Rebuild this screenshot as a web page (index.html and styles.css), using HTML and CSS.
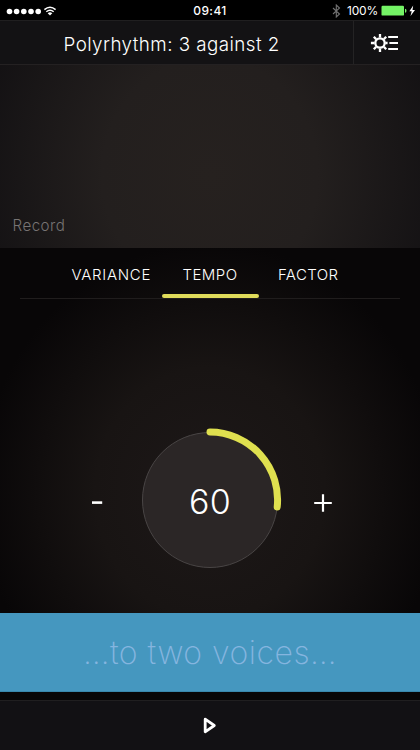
FILE: index.html
```
<!DOCTYPE html>
<html lang="en">
<head>
<meta charset="utf-8">
<title>Polyrhythm</title>
<link rel="stylesheet" href="styles.css">
</head>
<body>
<div class="app">
  <div class="status">
    <svg class="signal" width="60" height="20" viewBox="0 0 60 20">
      <g fill="#fff"><circle cx="9.5" cy="10.5" r="2.8"/><circle cx="16.6" cy="10.5" r="2.8"/><circle cx="23.8" cy="10.5" r="2.8"/><circle cx="31" cy="10.5" r="2.8"/><circle cx="38.2" cy="10.5" r="2.8"/><path d="M47.7 12.2Q50 10.5 52.3 12.2L50 14.5Z"/></g>
      <path d="M44.4 8.6Q50 3.8 55.6 8.6M46.3 10.8Q50 7.6 53.7 10.8" fill="none" stroke="#fff" stroke-width="1.5"/>
    </svg>
    <span class="time">09:41</span>
    <div class="power">
      <svg width="9" height="14" viewBox="0 0 9 14"><path d="M1 4L7.5 10L4.3 13V1L7.5 4L1 10" fill="none" stroke="#727272" stroke-width="1.1"/></svg>
      <span class="percent">100%</span>
      <svg width="36" height="14" viewBox="0 0 36 14"><rect x=".5" y="1.8" width="22.5" height="9.8" rx="1.2" fill="#74f365"/><path d="M24 4.8Q25.5 5 25.5 6.8T24 8.8Z" fill="#74f365"/><path d="M32.2 1.5L28.4 7.3H30.7L29.5 12L34 5.9H31.5Z" fill="#fff"/></svg>
    </div>
  </div>
  <header class="header">
    <h1 class="title">Polyrhythm: 3 against 2</h1>
    <button class="settings" aria-label="Settings">
      <svg width="30" height="22" viewBox="0 0 30 22" fill="none" stroke="#fff">
        <circle cx="10" cy="11" r="4.7" stroke-width="2.3"/>
        <path d="M10 5.5V2M10 16.5V20M4.5 11H.9M15.3 11H17.6M6.1 7.1L3.8 4.8M13.9 7.1L16.2 4.8M6.1 14.9L3.8 17.2M13.9 14.9L16.2 17.2" stroke-width="2.3"/>
        <path d="M18.2 5H28M19.4 11H28M18.2 17H28" stroke-width="2.1"/>
      </svg>
    </button>
  </header>
  <section class="recorder"><span class="record">Record</span></section>
  <main class="panel">
    <nav class="tabs">
      <span class="tab variance">VARIANCE</span>
      <span class="tab tempo">TEMPO</span>
      <span class="tab factor">FACTOR</span>
    </nav>
    <div class="control">
      <svg class="step" width="20" height="20" viewBox="0 0 20 20"><path d="M5 10.6H15.2" stroke="#fff" stroke-width="2.6"/></svg>
      <div class="dial">
        <svg class="ring" width="150" height="150" viewBox="0 0 150 150">
          <circle cx="75" cy="75" r="67.5" fill="#2b2626" stroke="#494545"/>
          <path d="M75 7A67.8 67.8 0 0 1 142.2 82" fill="none" stroke="#dfe04f" stroke-width="7" stroke-linecap="round"/>
        </svg>
        <span class="bpm">60</span>
      </div>
      <svg class="step" width="20" height="20" viewBox="0 0 20 20"><path d="M1.2 11H18.8M10 2.2V19.8" stroke="#fff" stroke-width="2.2"/></svg>
    </div>
  </main>
  <div class="caption"><span class="caption-text">…to two voices…</span></div>
  <footer class="player">
    <svg width="16" height="20" viewBox="0 0 16 20"><path d="M3.2 3.2L12.3 9.5L3.2 15.8Z" fill="none" stroke="#fff" stroke-width="2.8" stroke-linejoin="round"/></svg>
  </footer>
</div>
</body>
</html>
```
FILE: styles.css
```
* { box-sizing: border-box; }
body { margin: 0; background: #080607; color: #fff; font-family: Inter, "Liberation Sans", sans-serif; }
.app { width: 420px; height: 750px; display: flex; flex-direction: column; overflow: hidden; }
.app svg { display: block; flex: none; }
.status { height: 20px; flex: none; background: #000; display: grid; grid-template-columns: 1fr auto 1fr; align-items: center; }
.time { font-size: 12px; font-weight: 500; letter-spacing: .4px; line-height: 20px; padding-top: 1px; }
.power { display: flex; justify-content: flex-end; align-items: center; padding: 0 3px 0 0; }
.percent { font-size: 12px; letter-spacing: -.2px; margin: 0 3px 0 6px; }
.header { height: 45px; flex: none; display: flex; background: #131214; border-top: 1px solid #201f20; border-bottom: 1px solid #242122; }
.title { width: 353px; margin: 0; padding-left: 63.5px; font-size: 18.8px; font-weight: 350; line-height: 47px; letter-spacing: .45px; white-space: nowrap; }
.settings { flex: 1; border: 0; border-left: 1px solid #242324; background: none; padding: 0 0 0 16px; display: flex; align-items: center; }
.recorder { height: 183px; flex: none; padding: 151px 0 0 12.5px; background: radial-gradient(ellipse 240px 260px at 50% 60%, #26211f 0%, #231f1e 45%, #131113 100%); }
.record { display: block; color: #777373; font-size: 15.2px; font-weight: 350; line-height: 20px; letter-spacing: .45px; }
.panel { height: 365px; flex: none; background: radial-gradient(ellipse 230px 250px at 50% 67%, #1d1818 0%, #181413 50%, #080607 100%); }
.tabs { height: 51px; margin: 0 20px; border-bottom: 1px solid #201d1d; display: flex; }
.tab { height: 50px; padding-top: 17px; font-size: 15px; line-height: 20px; font-weight: 350; letter-spacing: .45px; white-space: nowrap; }
.variance { width: 90px; margin-left: 51.5px; letter-spacing: .7px; }
.tempo { width: 97px; text-align: center; }
.tempo::after { content: ""; display: block; height: 4px; margin-top: 9px; border-radius: 2px; background: #dfdb5a; }
.factor { margin-left: 19.5px; letter-spacing: .4px; }
.control { height: 150px; margin: 126px 87px 0; display: flex; align-items: center; justify-content: space-between; }
.dial { display: grid; place-items: center; }
.ring, .bpm { grid-area: 1 / 1; }
.bpm { font-size: 34px; font-weight: 350; letter-spacing: .2px; padding-top: 2px; }
.step { margin-top: 4px; }
.caption { height: 79px; flex: none; background: #4597bf; border-bottom: 1px solid #3987ac; display: flex; align-items: center; justify-content: center; }
.caption-text { color: #85b5df; font-size: 32px; font-weight: 250; letter-spacing: .5px; white-space: nowrap; }
.player { height: 50px; margin-top: 8px; flex: none; background: #121114; border-top: 1px solid #201f20; display: flex; align-items: center; justify-content: center; }
```
